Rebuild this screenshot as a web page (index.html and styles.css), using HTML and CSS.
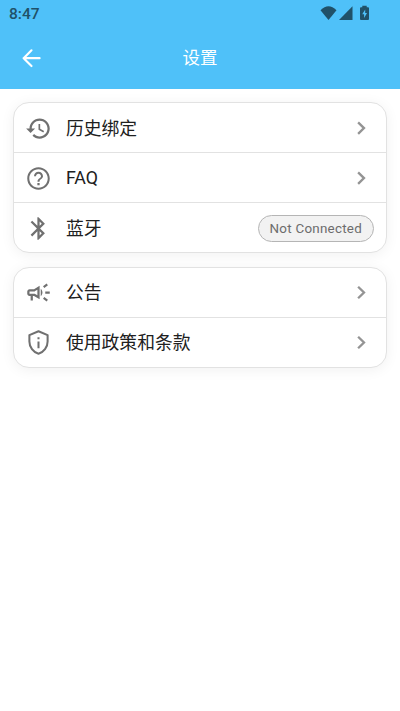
FILE: index.html
```html
<!DOCTYPE html>
<html lang="zh-CN">
<head>
<meta charset="utf-8">
<title>设置</title>
<link rel="stylesheet" href="styles.css">
</head>
<body>
<header class="header">
  <div class="status">
    <span class="time">8:47</span>
    <svg class="signals" viewBox="0 0 52 18" aria-hidden="true">
      <path d="M.5 5.2Q8.500-2.600 16.500 5.200L8.500 15z"/>
      <path d="M32.500 1.200V15H19z"/>
      <path fill-rule="evenodd" d="M42.300 0.700h4.400v1.500h1.300q1 0 1 1v10.800q0 1-1 1h-7q-1 0-1-1V3.200q0-1 1-1h1.300zM45.200 4.500l-3 4.700h1.900v3.800l2.900-4.900h-1.800z"/>
    </svg>
  </div>
  <div class="toolbar">
    <svg class="back" viewBox="0 0 24 24" aria-hidden="true"><path d="M19.200 11.700H5M12 4.700l-7 7 7 7"/></svg>
    <h1 class="title">设置</h1>
  </div>
</header>
<main class="content">
  <section class="card card-device">
    <div class="row">
      <svg class="icon" viewBox="0 0 24 24"><path d="M13 3c-4.970 0-9 4.030-9 9H1l3.960 4L9 12H6c0-3.870 3.130-7 7-7s7 3.130 7 7-3.130 7-7 7c-1.930 0-3.680-.79-4.940-2.060l-1.420 1.420C8.270 19.990 10.510 21 13 21c4.970 0 9-4.030 9-9s-4.030-9-9-9zm-1 5v5l4.280 2.540.72-1.210-3.500-2.080V8z"/></svg>
      <span class="label">历史绑定</span>
      <svg class="chevron" viewBox="0 0 24 24"><path d="M9 6.500l5.200 5.100L9 16.700"/></svg>
    </div>
    <div class="row">
      <svg class="icon" viewBox="0 0 24 24"><path d="M11 18h2v-2h-2v2zm1-16C6.480 2 2 6.480 2 12s4.480 10 10 10 10-4.480 10-10S17.520 2 12 2zm0 18.200c-4.520 0-8.200-3.680-8.200-8.200S7.480 3.800 12 3.800s8.200 3.680 8.200 8.200-3.680 8.200-8.200 8.200zM12 6c-2.210 0-4 1.790-4 4h1.800c0-1.200 1-2.200 2.200-2.200s2.200 1 2.200 2.200c0 2-3.100 1.750-3.100 4.800h1.800c0-2.250 3.100-2.500 3.100-4.800 0-2.210-1.790-4-4-4z"/></svg>
      <span class="label">FAQ</span>
      <svg class="chevron" viewBox="0 0 24 24"><path d="M9 6.500l5.200 5.100L9 16.700"/></svg>
    </div>
    <div class="row">
      <svg class="icon" viewBox="0 0 24 24"><path d="M17.710 7.710L12 2h-1v7.590L6.410 5 5 6.410 10.590 12 5 17.590 6.410 19 11 14.410V22h1l5.710-5.710-4.300-4.290 4.300-4.290zM13 5.830l1.880 1.880L13 9.590V5.830zm1.880 10.460L13 18.170v-3.760l1.880 1.880z"/></svg>
      <span class="label">蓝牙</span>
      <span class="badge">Not Connected</span>
    </div>
  </section>
  <section class="card">
    <div class="row">
      <svg class="icon" viewBox="0 0 24 24"><path d="M18 11v2h4v-2zM16 17.610l3.200 2.390 1.200-1.600-3.200-2.400zM20.400 5.600L19.200 4 16 6.400 17.200 8zM4 9c-1.100 0-2 .9-2 2v2c0 1.100.9 2 2 2h1v4h2v-4h1l5 3V6L8 9H4zm5.030 1.710L11 9.530v4.940l-1.970-1.180-.48-.29H4v-2h4.550l.48-.29zM15.500 12c0-1.330-.58-2.530-1.500-3.350v6.690c.92-.81 1.500-2.010 1.500-3.340z"/></svg>
      <span class="label">公告</span>
      <svg class="chevron" viewBox="0 0 24 24"><path d="M9 6.900l5.200 5.100L9 17.100"/></svg>
    </div>
    <div class="row">
      <svg class="icon" viewBox="0 0 24 24"><path class="shield" d="M12 2L3.900 5.400V11c0 5.100 3.400 9.700 8.100 11 4.700-1.300 8.100-5.900 8.100-11V5.400z"/><path d="M11.100 11h1.800v6h-1.800zM11.100 7.300h1.800v1.900h-1.800z"/></svg>
      <span class="label">使用政策和条款</span>
      <svg class="chevron" viewBox="0 0 24 24"><path d="M9 6.900l5.200 5.100L9 17.100"/></svg>
    </div>
  </section>
</main>
</body>
</html>
```

FILE: styles.css
```css
* {
  box-sizing: border-box;
}

body {
  margin: 0;
  min-height: 711px;
  background: #fff;
  color: #202020;
  font-family: Roboto, "Noto Sans CJK SC", sans-serif;
}

.header {
  height: 89px;
  background: #4fc1f9;
}

.status {
  display: flex;
  justify-content: space-between;
  height: 28px;
  padding: 5px 28px 0 9px;
  color: #205169;
}

.time {
  font-size: 15.5px;
  font-weight: 500;
  line-height: 18px;
}

.signals {
  width: 52px;
  height: 18px;
  fill: currentColor;
}

.toolbar {
  display: grid;
  grid-template-columns: 27px 1fr 27px;
  align-items: center;
  height: 60px;
  padding: 0 18px;
  color: #fff;
}

.back {
  width: 27px;
  height: 27px;
  fill: none;
  stroke: currentColor;
  stroke-width: 1.9;
  stroke-linecap: round;
  stroke-linejoin: round;
}

.title {
  margin: 0;
  font-size: 17.5px;
  font-weight: 400;
  line-height: 26px;
  text-align: center;
}

.content {
  display: flex;
  flex-direction: column;
  gap: 14px;
  padding: 13px 13px 0;
}

.card {
  border: 1px solid #e2e2e2;
  border-radius: 16px;
  background: #fff;
  box-shadow: 0 2px 14px rgba(0, 0, 0, 0.06);
}

.row {
  display: flex;
  align-items: center;
  height: 50px;
  padding: 0 11px;
}

.row:first-child {
  height: 49px;
}

.card-device .row {
  padding-top: 1px;
}

.row + .row {
  border-top: 1px solid #e2e2e2;
}

.icon {
  width: 27px;
  height: 27px;
  fill: #707070;
}

.shield {
  fill: none;
  stroke: #707070;
  stroke-width: 1.8;
  stroke-linejoin: round;
}

.label {
  flex: 1;
  margin-left: 14px;
  font-size: 17.8px;
  line-height: 26px;
}

.card-device .row:nth-child(odd) .label {
  padding-top: 2px;
}

.chevron {
  width: 27px;
  height: 27px;
  fill: none;
  stroke: #949494;
  stroke-width: 2.1;
}

.badge {
  height: 27px;
  margin-right: 1px;
  padding: 0 11px;
  border: 1px solid #b5b5b5;
  border-radius: 14px;
  background: #f2f2f2;
  color: #6c6c6c;
  font-size: 13.4px;
  line-height: 25px;
  letter-spacing: 0.25px;
}
```
